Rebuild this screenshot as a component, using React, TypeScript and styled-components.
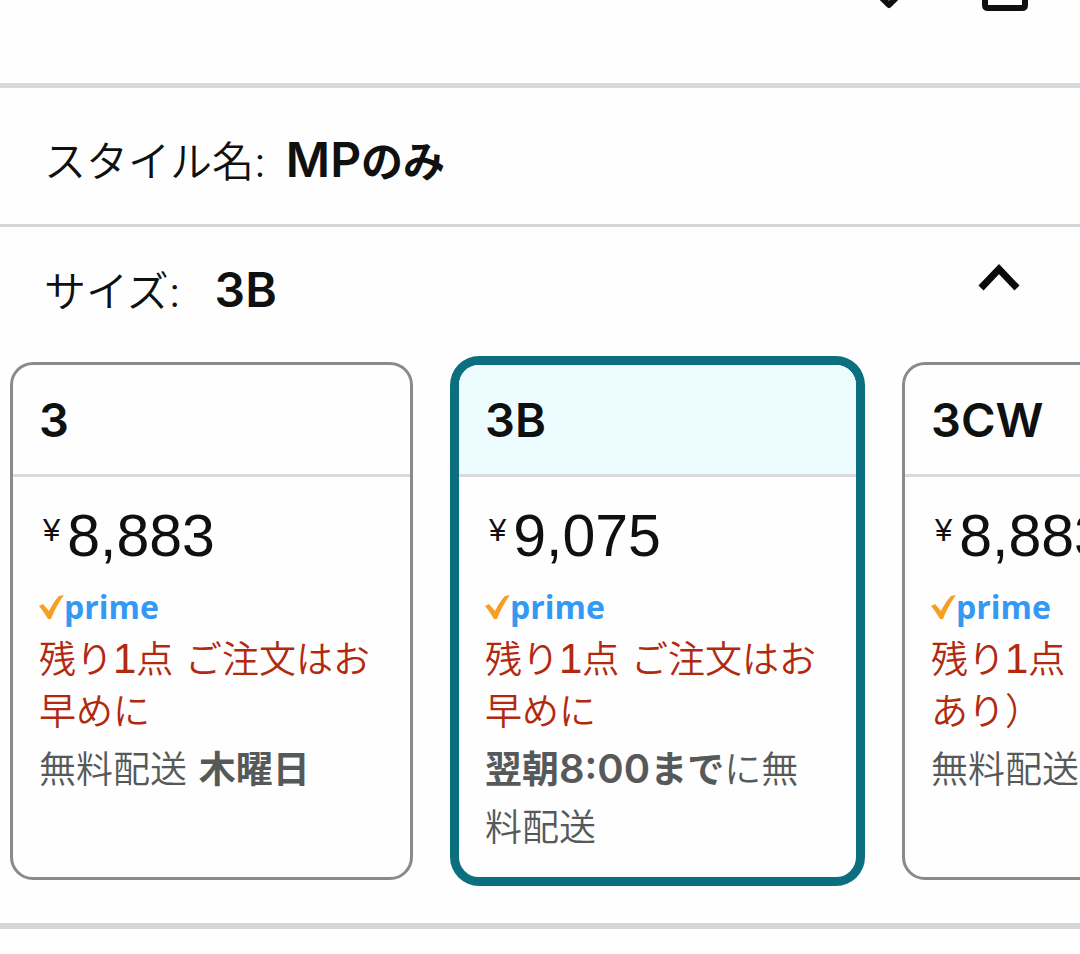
import React, { useState } from "react";
import styled, { createGlobalStyle } from "styled-components";

const GlobalStyle = createGlobalStyle`
  * { box-sizing: border-box; }
  body {
    margin: 0;
    background: #fefefe;
    color: #0f1111;
    font-family: Inter, "Noto Sans CJK JP", sans-serif;
    font-weight: 350;
    overflow-x: hidden;
  }
  button {
    border: 0;
    padding: 0;
    background: none;
    color: inherit;
    font: inherit;
    text-align: left;
    cursor: pointer;
  }
`;

const Page = styled.main`
  width: 100%;
  overflow: hidden;
`;

const ActionBar = styled.header`
  display: flex;
  justify-content: flex-end;
  align-items: flex-start;
  gap: 66px;
  height: 88px;
  padding-right: 50px;
  border-bottom: 5px solid #d7d9db;
`;

const IconButton = styled.button`
  display: flex;
  flex: none;
`;

const StyleRow = styled.section`
  display: flex;
  align-items: center;
  gap: 20px;
  height: 139px;
  padding: 12px 44px 0;
  border-bottom: 3px solid #d5d6d7;
  font-size: 42px;
  line-height: 60px;
`;

const SizeSection = styled.section`
  border-bottom: 6px solid #d6d7da;
`;

const SizeRow = styled.div`
  display: flex;
  align-items: flex-start;
  gap: 34px;
  padding: 35px 60px 10px 44px;
  font-size: 42px;
  line-height: 60px;
`;

const Label = styled.h2`
  margin: 0;
  font-size: inherit;
  font-weight: 350;
`;

const Value = styled.span`
  font-weight: 700;
`;

const Latin = styled.span<{ $size: number }>`
  font-size: ${(p) => p.$size}px;
  font-weight: 600;
  line-height: 1;
`;

const Digit = styled.span`
  font-family: "Liberation Sans", sans-serif;
  font-size: 42px;
  line-height: 1;
`;

const Toggle = styled(IconButton)`
  margin-left: auto;
`;

const Carousel = styled.div`
  display: flex;
  gap: 43px;
  padding: 30px 10px 43px;
`;

const Card = styled.button<{ $selected: boolean }>`
  display: flex;
  flex: none;
  flex-direction: column;
  width: 403px;
  overflow: hidden;
  border: 3px solid ${(p) => (p.$selected ? "#0c6f7f" : "#888a8b")};
  border-radius: 23px;
  box-shadow: ${(p) => (p.$selected ? "0 0 0 6px #0c6f7f" : "none")};
  background: #fefefe;
`;

const CardTitle = styled.span<{ $selected: boolean }>`
  display: block;
  width: 100%;
  padding: 25px 26px 24px;
  border-bottom: 3px solid #d8dadb;
  background: ${(p) => (p.$selected ? "#edfcfe" : "transparent")};
  font-size: 47px;
  font-weight: 600;
  line-height: 60px;
`;

const CardBody = styled.span`
  display: flex;
  flex-direction: column;
  width: 100%;
  min-height: 400px;
  padding: 25px 26px 20px;
`;

const Price = styled.span`
  display: flex;
  align-items: flex-start;
  gap: 7px;
  padding-left: 4px;
  font-family: "Liberation Sans", sans-serif;
  font-size: 59px;
  line-height: 68px;
`;

const Yen = styled.span`
  font-size: 31px;
  line-height: 58px;
`;

const Prime = styled.span`
  display: flex;
  align-items: flex-end;
  height: 64px;
  padding-bottom: 7px;
  color: #3399f3;
  font-family: "Open Sans", sans-serif;
  font-size: 32px;
  font-weight: 700;
  line-height: 40px;
`;

const Stock = styled.span`
  margin-bottom: 3px;
  color: #b12a10;
  font-size: 37px;
  line-height: 52px;
`;

const Delivery = styled.span`
  color: #565959;
  font-size: 37px;
  line-height: 58px;

  b { font-weight: 700; }
`;

const Check = () => (
  <svg width="25" height="40" viewBox="0 0 25 40" aria-hidden="true">
    <path d="M0 19 L4 17 L10 24 Q15 14 20 9 L25 8 Q17 19 12 32 L9 32 Q5 25 0 19 Z" fill="#f5a024" />
  </svg>
);

type Option = { name: string; price: string; stock: React.ReactNode; delivery: React.ReactNode };

const options: Option[] = [
  {
    name: "3",
    price: "8,883",
    stock: <>残り<Digit>1</Digit>点<Digit> </Digit>ご注文はお早めに</>,
    delivery: <>無料配送<Digit> </Digit><b>木曜日</b></>,
  },
  {
    name: "3B",
    price: "9,075",
    stock: <>残り<Digit>1</Digit>点<Digit> </Digit>ご注文はお早めに</>,
    delivery: <><b>翌朝<Latin $size={40}>8:00</Latin>まで</b>に無料配送</>,
  },
  {
    name: "3CW",
    price: "8,883",
    stock: <>残り<Digit>1</Digit>点（入荷予定あり）</>,
    delivery: <>無料配送<Digit> </Digit><b>木曜日</b></>,
  },
];

export default function App() {
  const [selected, setSelected] = useState("3B");
  const [open, setOpen] = useState(true);

  return (
    <Page lang="ja">
      <GlobalStyle />
      <ActionBar>
        <IconButton aria-label="お気に入り">
          <svg width="50" height="12" viewBox="0 0 50 12" fill="none">
            <path d="M10 -10 L25 5 L40 -10" stroke="#0f1111" strokeWidth="6" strokeLinejoin="round" />
          </svg>
        </IconButton>
        <IconButton aria-label="共有">
          <svg width="50" height="12" viewBox="0 0 50 12" fill="none">
            <path d="M5 -10 V5 Q5 8 8 8 H42 Q45 8 45 5 V-10" stroke="#0f1111" strokeWidth="6" />
          </svg>
        </IconButton>
      </ActionBar>

      <StyleRow>
        <Label>スタイル名:</Label>
        <Value><Latin $size={48}>MP</Latin>のみ</Value>
      </StyleRow>

      <SizeSection>
        <SizeRow>
          <Label>サイズ:</Label>
          <Value><Latin $size={48}>3B</Latin></Value>
          <Toggle aria-label="サイズ" aria-expanded={open} onClick={() => setOpen(!open)}>
            <svg width="42" height="32" viewBox="0 0 42 32" fill="none">
              <path d="M3 26 L21 7 L39 26" stroke="#0a0a0a" strokeWidth="7" />
            </svg>
          </Toggle>
        </SizeRow>
        {open && (
          <Carousel>
            {options.map((o) => {
              const on = o.name === selected;
              return (
                <Card key={o.name} $selected={on} aria-pressed={on} onClick={() => setSelected(o.name)}>
                  <CardTitle $selected={on}>{o.name}</CardTitle>
                  <CardBody>
                    <Price><Yen>¥</Yen>{o.price}</Price>
                    <Prime><Check />prime</Prime>
                    <Stock>{o.stock}</Stock>
                    <Delivery>{o.delivery}</Delivery>
                  </CardBody>
                </Card>
              );
            })}
          </Carousel>
        )}
      </SizeSection>
    </Page>
  );
}
